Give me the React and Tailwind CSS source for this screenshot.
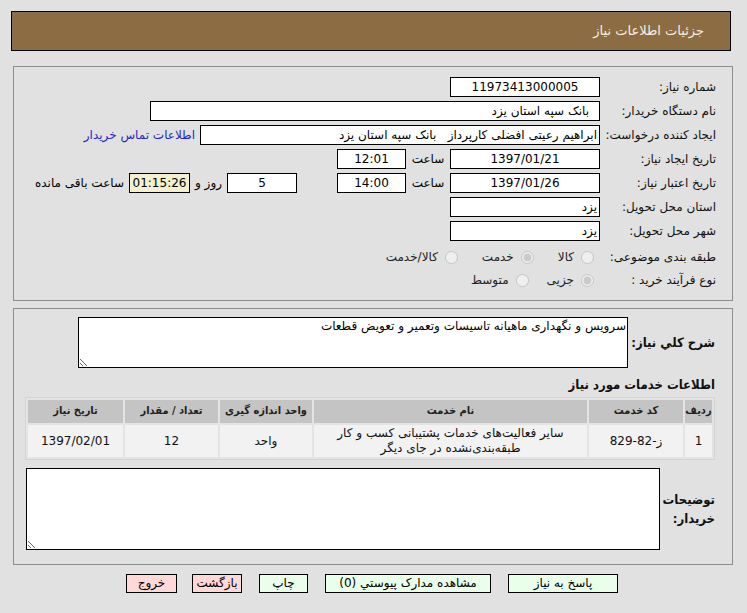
import React from "react"

const font = { fontFamily: 'Tahoma, "DejaVu Sans", sans-serif' }
const cond = { fontFamily: '"DejaVu Sans Condensed", Tahoma, "DejaVu Sans", sans-serif' }

function Box({ w, children, center, className = "" }) {
  return (
    <div
      className={`h-[20px] border border-black text-[12px] leading-[18px] px-[2px] whitespace-nowrap overflow-hidden ${center ? "text-center" : "text-right"} ${className || "bg-white"}`}
      style={{ width: w }}
    >
      {children}
    </div>
  )
}

function Row({ label, children, className = "h-[24px]" }) {
  return (
    <div className={`flex items-center ${className}`}>
      <div className="w-[132px] pr-[16px] shrink-0 text-[12px] text-[#111] whitespace-nowrap">{label}</div>
      <div className="flex items-center gap-[5px]">{children}</div>
    </div>
  )
}

function Radio({ label, checked }) {
  return (
    <label className="flex items-center gap-[7px] text-[12px] text-[#222]">
      <input type="radio" disabled defaultChecked={checked} className="w-[13px] h-[13px] m-0" />
      <span>{label}</span>
    </label>
  )
}

export default function App() {
  const cols = [
    { t: "ردیف", w: "w-[27px]" },
    { t: "کد خدمت", w: "w-[94px]" },
    { t: "نام خدمت", w: "w-[273px]" },
    { t: "واحد اندازه گیری", w: "w-[92px]" },
    { t: "تعداد / مقدار", w: "w-[93px]" },
    { t: "تاریخ نیاز", w: "" },
  ]

  return (
    <div dir="rtl" className="w-[747px] h-[613px] bg-[#e1e1e1] pt-[11px] overflow-hidden" style={font}>
      {/* header */}
      <div className="mr-[16px] ml-[11px] h-[40px] bg-[#8c6c42] border border-black flex items-center pr-[26px] text-[13px] text-[#f6efe2]">
        جزئیات اطلاعات نیاز
      </div>

      {/* panel 1 */}
      <div className="mt-[15px] mr-[14px] ml-[13px] h-[235px] border border-[#8d8d8d] pt-[8px]">
        <Row label="شماره نیاز:">
          <Box w={150} center>11973413000005</Box>
        </Row>
        <Row label="نام دستگاه خریدار:">
          <Box w={450} className="bg-white pr-[10px]">بانک سپه استان یزد</Box>
        </Row>
        <Row label="ایجاد کننده درخواست:">
          <Box w={400}>ابراهیم رعیتی افضلی کارپرداز&nbsp;&nbsp;&nbsp;بانک سپه استان یزد</Box>
          <a className="text-[12px] text-[#2626c8] cursor-pointer">اطلاعات تماس خریدار</a>
        </Row>
        <Row label="تاریخ ایجاد نیاز:">
          <Box w={150} center>1397/01/21</Box>
          <span className="text-[12px] w-[34px] text-center">ساعت</span>
          <Box w={69} center>12:01</Box>
        </Row>
        <Row label="تاریخ اعتبار نیاز:">
          <Box w={150} center>1397/01/26</Box>
          <span className="text-[12px] w-[34px] text-center">ساعت</span>
          <Box w={69} center>14:00</Box>
          <Box w={70} center className="bg-white mr-[35px]">5</Box>
          <span className="text-[12px]">روز و</span>
          <Box w={61} center className="bg-[#f3efcf]">01:15:26</Box>
          <span className="text-[12px]">ساعت باقی مانده</span>
        </Row>
        <Row label="استان محل تحویل:">
          <Box w={150}>یزد</Box>
        </Row>
        <Row label="شهر محل تحویل:">
          <Box w={150}>یزد</Box>
        </Row>
        <Row label="طبقه بندی موضوعی:" className="h-[28px]">
          <div className="flex items-center gap-[24px] pr-[6px]">
            <Radio label="کالا" />
            <Radio label="خدمت" checked />
            <Radio label="کالا/خدمت" />
          </div>
        </Row>
        <Row label="نوع فرآیند خرید :" className="h-[18px]">
          <div className="flex items-center gap-[18px] pr-[6px]">
            <Radio label="جزیی" checked />
            <Radio label="متوسط" />
          </div>
        </Row>
      </div>

      {/* panel 2 */}
      <div className="mt-[7px] mr-[14px] ml-[13px] h-[257px] border border-[#8d8d8d] pt-[8px] pr-[17px] pl-[11px]">
        <div className="flex items-center gap-[5px]">
          <div className="w-[82px] text-[13px] font-bold text-[#111] whitespace-nowrap" style={cond}>شرح کلي نياز:</div>
          <textarea
            readOnly
            defaultValue="سرویس و نگهداری ماهیانه تاسیسات وتعمیر و تعویض قطعات"
            className="w-[550px] h-[51px] border border-black bg-white text-[12px] leading-[16px] px-[1px] py-0 outline-none"
            style={font}
          />
        </div>

        <div className="mt-[7px] text-[13px] font-bold text-[#111] h-[22px] leading-[20px] whitespace-nowrap" style={cond}>اطلاعات خدمات مورد نیاز</div>

        <table className="w-[690px] table-fixed border border-[#d4d4d4] border-separate border-spacing-[2px] bg-[#e4e4e4] text-[12px]">
          <thead>
            <tr>
              {cols.map((c) => (
                <th key={c.t} className={`${c.w} h-[23px] bg-[#c4c4c4] font-bold text-[#222] text-center p-0 whitespace-nowrap text-[11px]`} style={cond}>
                  {c.t}
                </th>
              ))}
            </tr>
          </thead>
          <tbody>
            <tr className="text-center text-[#111]">
              <td className="h-[32px] bg-[#f2f2f2] p-0">1</td>
              <td className="bg-[#f2f2f2] p-0">ز-82-829</td>
              <td className="bg-[#f2f2f2] leading-[15px] p-0">
                سایر فعالیت‌های خدمات پشتیبانی کسب و کار
                <br />
                طبقه‌بندی‌نشده در جای دیگر
              </td>
              <td className="bg-[#f2f2f2] p-0">واحد</td>
              <td className="bg-[#f2f2f2] p-0">12</td>
              <td className="bg-[#f2f2f2] p-0">1397/02/01</td>
            </tr>
          </tbody>
        </table>

        <div className="mt-[8px] flex items-center gap-[5px] pl-[1px]">
          <div className="w-[50px] text-[13px] font-bold text-[#111] leading-[19px] whitespace-nowrap" style={cond}>
            توضیحات
            <br />
            خریدار:
          </div>
          <textarea
            readOnly
            className="w-[635px] h-[82px] border border-black bg-white text-[12px] outline-none"
            style={font}
          />
        </div>
      </div>

      {/* buttons */}
      <div className="mt-[9px] flex justify-start gap-[6px] pr-[129px]">
        <button className="w-[110px] h-[19px] border border-black bg-[#eaffea] text-[12px] leading-[17px]" style={font}>پاسخ به نیاز</button>
        <button className="w-[166px] h-[19px] border border-black bg-[#eaffea] text-[12px] leading-[17px] mr-[11px]" style={font}>مشاهده مدارک پیوستي (0)</button>
        <button className="w-[49px] h-[19px] border border-black bg-[#eaffea] text-[12px] leading-[17px] mr-[11px]" style={font}>چاپ</button>
        <button className="w-[50px] h-[19px] border border-black bg-[#ffd8d8] text-[12px] leading-[17px] mr-[11px]" style={font}>بازگشت</button>
        <button className="w-[51px] h-[19px] border border-black bg-[#ffd8d8] text-[12px] leading-[17px] mr-[9px]" style={font}>خروج</button>
      </div>
    </div>
  )
}
